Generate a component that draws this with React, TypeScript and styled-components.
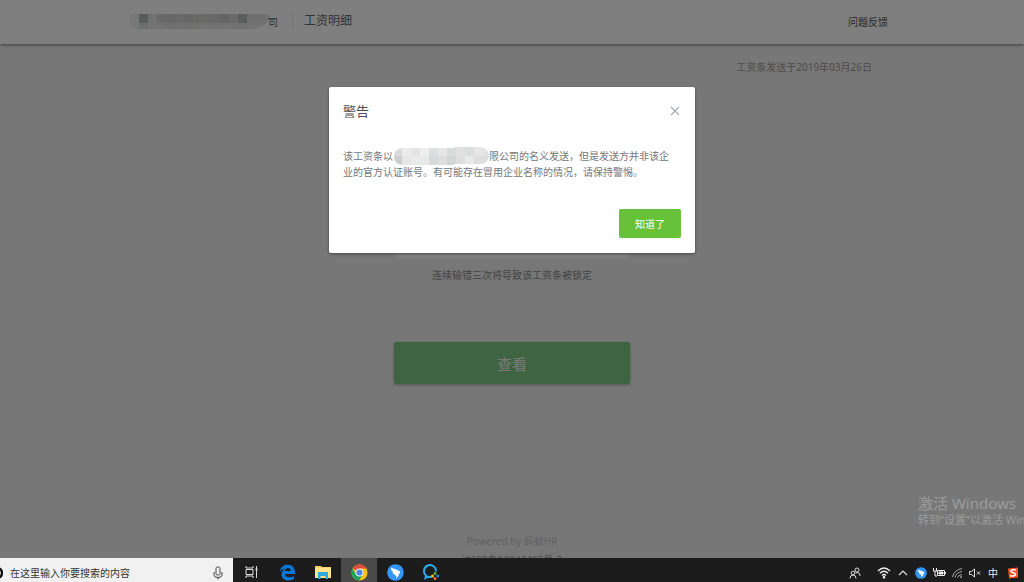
import React from "react";
import styled, { createGlobalStyle } from "styled-components";

const Global = createGlobalStyle`
  *, *::before, *::after { box-sizing: border-box; }
  body {
    margin: 0;
    font-family: "Noto Sans", "Noto Sans CJK SC", sans-serif;
    font-size: 10px;
    background: #efefef;
  }
  button, input { font-family: inherit; }
  p, h1, h2 { margin: 0; font-weight: 400; }
`;

const Desktop = styled.div`
  display: flex;
  flex-direction: column;
  height: 100vh;
  overflow: hidden;
`;

const Browser = styled.div`
  position: relative;
  flex: 1;
  min-height: 0;
  overflow: hidden;
  display: flex;
  flex-direction: column;
  background: #efefef;
`;

const Header = styled.header`
  flex: none;
  background: #fff;
  box-shadow: 0 1px 3px rgba(0, 0, 0, 0.5);
`;

const Wrap = styled.div`
  width: 100%;
  max-width: 764px;
  margin: 0 auto;
`;

const HeaderRow = styled(Wrap)`
  display: flex;
  align-items: center;
  height: 44px;
  padding: 0 6px 2px 0;
`;

const Company = styled.div`
  display: flex;
  align-items: center;
  height: 16px;
  font-size: 10px;
  color: #666;
  padding-right: 14px;
  border-right: 1px solid #e6e6e6;
  margin-right: 11px;
`;

const PageTitle = styled.h1`
  flex: 1;
  font-size: 12px;
  line-height: 16px;
  color: #666;
`;

const Feedback = styled.a`
  font-size: 10px;
  color: #4c4c4c;
  text-decoration: none;
`;

const SentDate = styled(Wrap)`
  padding: 15px 22px 0 0;
  text-align: right;
  line-height: 16px;
  color: #999;
`;

const Form = styled.form`
  display: flex;
  flex-direction: column;
  align-items: center;
  width: 236px;
  margin: 152px auto 0;
`;

const Password = styled.input`
  width: 234px;
  height: 32px;
  border: 1px solid #f4f4f4;
  background: #fff;
`;

const Hint = styled.p`
  margin-top: 8px;
  line-height: 16px;
  color: #888;
`;

const Submit = styled.button`
  width: 100%;
  height: 42px;
  margin-top: 59px;
  border: 0;
  border-radius: 2px;
  background: #7fc883;
  color: #f4f4f4;
  font-size: 15px;
  box-shadow: 0 1px 3px rgba(0, 0, 0, 0.3);
`;

const Footer = styled.footer`
  position: absolute;
  inset: auto 0 -12px;
  text-align: center;
  line-height: 19px;
  color: #c4c4c4;
`;

const Licence = styled.p`
  color: #999;
`;

const Overlay = styled.div`
  position: absolute;
  inset: 0;
  display: flex;
  align-items: flex-start;
  justify-content: center;
  padding-top: 87px;
  background: rgba(0, 0, 0, 0.5);
`;

const Dialog = styled.section`
  width: 366px;
  padding: 15px 14px 15px;
  border-radius: 2px;
  background: #fff;
  box-shadow: 0 1px 3px rgba(0, 0, 0, 0.4);
`;

const DialogHead = styled.div`
  display: flex;
  align-items: center;
  justify-content: space-between;
  height: 18px;
`;

const DialogTitle = styled.h2`
  font-size: 13px;
  line-height: 18px;
  color: #4c4f54;
`;

const Close = styled.button`
  display: flex;
  padding: 1px;
  border: 0;
  background: none;
`;

const Message = styled.p`
  margin-top: 28px;
  line-height: 16px;
  color: #74767a;
`;

const Line = styled.span`
  display: flex;
  align-items: center;
  height: 16px;
  white-space: nowrap;
`;

const Actions = styled.div`
  display: flex;
  justify-content: flex-end;
  margin-top: 29px;
`;

const Confirm = styled.button`
  width: 62px;
  height: 29px;
  padding: 0;
  border: 0;
  border-radius: 2px;
  background: #67c23a;
  color: #fff;
  font-size: 10px;
`;

const Watermark = styled.div`
  position: absolute;
  right: 0;
  bottom: 30px;
  width: 106px;
  white-space: nowrap;
  color: #9c9c9c;
`;

const WatermarkTitle = styled.p`
  font-size: 15px;
  line-height: 18px;
`;

const WatermarkText = styled.p`
  font-size: 11px;
  line-height: 16px;
`;

const Taskbar = styled.nav`
  flex: none;
  display: flex;
  height: 24px;
  background: #1c1c1c;
`;

const Search = styled.label`
  display: flex;
  align-items: center;
  width: 233px;
  padding: 6px 9px 0 0;
  background: #f1f1f1;
  overflow: hidden;
`;

const SearchInput = styled.input`
  flex: 1;
  min-width: 0;
  padding: 0 0 0 7px;
  border: 0;
  outline: 0;
  background: none;
  font-size: 10px;
  line-height: 16px;
  &::placeholder { color: #333; opacity: 1; }
`;

const AppButton = styled.button<{ $active?: boolean }>`
  display: flex;
  justify-content: center;
  width: 36px;
  height: 24px;
  padding: 6px 0 0;
  border: 0;
  background: ${(p) => (p.$active ? "#4a4a4a" : "none")};
`;

const Apps = styled.div`
  display: flex;
  flex: 1;
`;

const Tray = styled.div`
  display: flex;
`;

const TrayItem = styled.button<{ $w?: number }>`
  display: flex;
  align-items: center;
  justify-content: center;
  width: ${(p) => p.$w ?? 18}px;
  height: 24px;
  padding: 5px 0 0;
  border: 0;
  background: none;
  color: #e8e8e8;
  font-size: 10px;
`;

const Redaction = styled.svg<{ $pull?: number }>`
  flex: none;
  margin-right: ${(p) => -(p.$pull ?? 0)}px;
`;

const nameTones = ["#f0f0f0", "#b4b6b6", "#e4e4e4", "#d2d2d2", "#cfcfcf", "#d2d2d2", "#cecece", "#d4d4d2", "#d2d2d0", "#d0d0d0", "#cacaca", "#d4d4d4", "#b8baba", "#dcdcdc", "#dedede", "#e2e2e2"];
const nameTonesLow = ["#f2f2f2", "#dcdede", "#e8e8e8", "#e6e6e6", "#e0e0e0", "#e2e2e2", "#e0e0e0", "#e2e2e0", "#e4e4e4", "#e6e6e6", "#e4e4e4", "#e4e4e4", "#e0e0e0", "#e6e6e6", "#e8e8e8", "#ececec"];
const bodyTones = ["#d8d9da", "#ececec", "#e4e4e4", "#eeeeee", "#dcdedf", "#e6e6e6", "#dadcdc", "#e0e0e0", "#dcdede", "#e6e6e6", "#e2e2e2"];
const bodyTonesLow = ["#cccdce", "#e6e6e6", "#eaeaea", "#e8e8e8", "#d8dada", "#dedede", "#d4d6d6", "#dedede", "#e8e8e8", "#dedede", "#dcdcdc"];

const Ding = ({ size }: { size: number }) => (
  <svg width={size} height={size} viewBox="0 0 18 18">
    <circle cx="9" cy="9" r="8.8" fill="#3296fa" />
    <path d="M4 4c4 1 7.500 2.300 10 4-.3 1.800-1.300 3-2.500 4h1.300L9.500 15.500l.6-2.700H8.700l.6-1.200C7 11 6 10 5.500 8.800l2 .2C5.500 8 4.300 6.500 4 4z" fill="#fff" />
  </svg>
);

export default function App() {
  return (
    <Desktop>
      <Global />
      <Browser>
        <Header>
          <HeaderRow>
            <Company>
              <Redaction $pull={2} width="140" height="18" viewBox="0 0 140 18">
                <defs><clipPath id="n"><path d="M0 2H136Q143 4 138 9Q132 16 124 17H10Q2 17 0 15Z" /></clipPath></defs>
                <g clipPath="url(#n)">
                  {nameTones.map((c, i) => <rect key={i} x={i * 9} y="0" width="9" height="11" fill={c} />)}
                  {nameTonesLow.map((c, i) => <rect key={i} x={i * 9} y="11" width="9" height="7" fill={c} />)}
                </g>
              </Redaction>
              司
            </Company>
            <PageTitle>工资明细</PageTitle>
            <Feedback href="#feedback">问题反馈</Feedback>
          </HeaderRow>
        </Header>
        <SentDate>工资条发送于2019年03月26日</SentDate>
        <Form>
          <Password type="password" aria-label="密码" />
          <Hint>连续输错三次将导致该工资条被锁定</Hint>
          <Submit type="button">查看</Submit>
        </Form>
        <Footer>
          <p>Powered by 蚂蚁HR</p>
          <Licence>沪ICP备13042405号-3</Licence>
        </Footer>
        <Overlay>
          <Dialog role="dialog" aria-labelledby="warn">
            <DialogHead>
              <DialogTitle id="warn">警告</DialogTitle>
              <Close aria-label="关闭">
                <svg width="10" height="10" viewBox="0 0 10 10"><path d="M1 1l8 8M9 1L1 9" stroke="#a5a8ad" strokeWidth="1.1" /></svg>
              </Close>
            </DialogHead>
            <Message>
              <Line>
                该工资条以
                <Redaction width="96" height="19" viewBox="0 0 96 19">
                  <defs><clipPath id="b"><path d="M9 1H60L62 0H88Q96 2 96 9Q95 16 88 17H62L60 18H10Q1 17 1 10Q1 2 9 1Z" /></clipPath></defs>
                  <g clipPath="url(#b)">
                    {bodyTones.map((c, i) => <rect key={i} x={i * 9} y="0" width="9" height="9" fill={c} />)}
                    {bodyTonesLow.map((c, i) => <rect key={i} x={i * 9} y="9" width="9" height="10" fill={c} />)}
                  </g>
                </Redaction>
                限公司的名义发送，但是发送方并非该企
              </Line>
              <Line>业的官方认证账号。有可能存在冒用企业名称的情况，请保持警惕。</Line>
            </Message>
            <Actions><Confirm>知道了</Confirm></Actions>
          </Dialog>
        </Overlay>
        <Watermark>
          <WatermarkTitle>激活 Windows</WatermarkTitle>
          <WatermarkText>转到“设置”以激活 Win</WatermarkText>
        </Watermark>
      </Browser>
      <Taskbar>
        <Search>
          <svg width="3" height="14" viewBox="0 0 3 14"><path d="M-3 2A5 5 0 0 1-3 12" fill="none" stroke="#111" strokeWidth="2.500" /></svg>
          <SearchInput placeholder="在这里输入你要搜索的内容" aria-label="搜索" />
          <svg width="12" height="14" viewBox="0 0 12 14" fill="none" stroke="#444"><rect x="4" y="1" width="4" height="8" rx="1.500" /><path d="M2 6v3q0 2.500 4 2.500T10 9V6M6 11.500V13.500" /></svg>
        </Search>
        <Apps>
          <AppButton aria-label="任务视图">
            <svg width="16" height="16" viewBox="0 0 16 16" fill="none" stroke="#ddd"><path d="M3 2v2h7V2M3 14v-2h7v2M3 5.500h7v5H3zM13.500 2v12" /><path d="M12.500 5.500h2" strokeWidth="2" /></svg>
          </AppButton>
          <AppButton aria-label="Edge">
            <svg width="17" height="17" viewBox="0 0 17 17"><path d="M1 7.500C1.500 3 4.800.8 8.500.8c5 0 7.500 3.500 7.500 7.700v1.400H6c.2 2.400 2 3.300 4.200 3.300 1.800 0 3.300-.5 4.600-1.300v3.300c-1.500.8-3.300 1.200-5.400 1.200-4 0-6.900-2.200-6.900-6 0-2.600 1.400-4.600 3.800-5.600C3.800 5 2 6 1 7.500zM6 7h5.700c0-2-.9-3-2.600-3S6.300 5.200 6 7z" fill="#0a78d7" /></svg>
          </AppButton>
          <AppButton aria-label="文件资源管理器">
            <svg width="16" height="16" viewBox="0 0 16 16"><path d="M0 2h6l1 1h9v11H0z" fill="#f3cf6a" /><path d="M0 4h16v10H0z" fill="#fbe28e" /><path d="M3 8h10v7h-2.500v-3h-5v3H3z" fill="#31a8e0" /></svg>
          </AppButton>
          <AppButton $active aria-label="Chrome">
            <svg width="17" height="17" viewBox="0 0 18 18"><circle cx="9" cy="9" r="8.500" fill="#fbc116" /><path d="M9 9L1.640 4.750A8.500 8.500 0 0 1 16.400 4.800H9z" fill="#dd4b3e" /><path d="M1.640 4.750A8.500 8.500 0 0 0 8.700 17.500L12.500 11 5.300 11z" fill="#1da261" /><circle cx="9" cy="9" r="4.200" fill="#fff" /><circle cx="9" cy="9" r="3.300" fill="#4a86e8" /></svg>
          </AppButton>
          <AppButton aria-label="钉钉"><Ding size={17} /></AppButton>
          <AppButton aria-label="企业微信">
            <svg width="18" height="17" viewBox="0 0 18 17"><path d="M14 7.500A6 6 0 1 0 4 11.500L3.500 14 6.500 12.700Q8 13.300 9.500 13" fill="none" stroke="#2ea8ee" strokeWidth="2" /><circle cx="13" cy="9.500" r="1.500" fill="#5fb82e" /><circle cx="15.800" cy="12" r="1.500" fill="#1e8be0" /><circle cx="13" cy="14.500" r="1.500" fill="#f0642f" /><circle cx="10.500" cy="12" r="1.500" fill="#fbc82e" /></svg>
          </AppButton>
        </Apps>
        <Tray>
          <TrayItem $w={38} aria-label="人脉">
            <svg width="12" height="12" viewBox="0 0 12 12" fill="none" stroke="#ddd"><circle cx="8" cy="3" r="2" /><circle cx="4" cy="6" r="1.800" /><path d="M1 11.500q0-3.500 3-3.500t3 3.500M6.500 6Q11 4.500 11 9" /></svg>
          </TrayItem>
          <TrayItem $w={20} aria-label="无线网络">
            <svg width="14" height="13" viewBox="0 0 14 13" fill="none" stroke="#eee" strokeWidth="1.300"><path d="M1 5q6-6 12 0M3 7.300q4-4 8 0M5 9.500q2-2 4 0" /><circle cx="7" cy="11.300" r=".7" fill="#eee" /></svg>
          </TrayItem>
          <TrayItem aria-label="显示隐藏的图标">
            <svg width="10" height="6" viewBox="0 0 10 6"><path d="M1 5l4-4 4 4" fill="none" stroke="#ddd" strokeWidth="1.200" /></svg>
          </TrayItem>
          <TrayItem aria-label="钉钉通知"><Ding size={12} /></TrayItem>
          <TrayItem aria-label="电池">
            <svg width="13" height="9" viewBox="0 0 13 9" fill="none" stroke="#eee"><path d="M4.500 2.500h7v5h-7z" /><path d="M6 4h4v2H6z" fill="#eee" /><path d="M12.500 4v2M.5 0v3M3.500 0v3M0 3h4M2 3v5h2" /></svg>
          </TrayItem>
          <TrayItem aria-label="信号">
            <svg width="11" height="10" viewBox="0 0 11 10" fill="none" stroke="#aaa"><path d="M.5 9Q2 2 10 .5M3 9.500Q4 4.500 10 3.500M5.500 9.500Q6 7 10 6.500" /><circle cx="9" cy="9" r=".8" fill="#eee" stroke="none" /></svg>
          </TrayItem>
          <TrayItem aria-label="静音">
            <svg width="12" height="10" viewBox="0 0 12 10" fill="none" stroke="#ddd"><path d="M.5 3.500h2L5.500 1v8L2.500 6.500h-2zM8 3.500l3 3M11 3.500l-3 3" /></svg>
          </TrayItem>
          <TrayItem>中</TrayItem>
          <TrayItem $w={22} aria-label="搜狗输入法">
            <svg width="12" height="12" viewBox="0 0 12 12"><path d="M1 1.500L11 .5V10.500L2 11.500z" fill="#f0501f" /><path d="M9 3Q4 2 4 4.300C4 6 8.500 5.500 8.500 7.500Q8.500 9.500 3 8.800" fill="none" stroke="#fff" strokeWidth="1.600" /></svg>
          </TrayItem>
        </Tray>
      </Taskbar>
    </Desktop>
  );
}
